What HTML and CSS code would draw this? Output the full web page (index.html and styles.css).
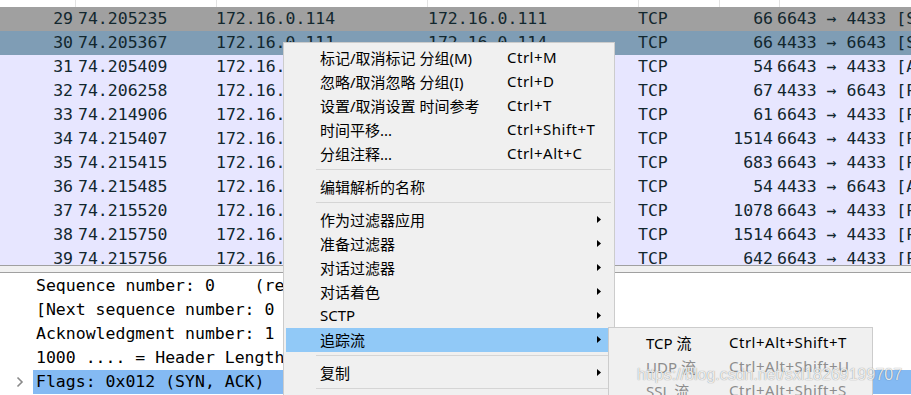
FILE: index.html
```html
<!DOCTYPE html>
<html>
  <head>
    <link rel="stylesheet" href="styles.css">
  </head>
  <body>
    <div class="screen">
      <div class="list-head">
        <span></span><span></span><span></span><span></span><span></span><span></span><span></span>
      </div>

      <div class="packet-list">
        <div class="row ignored">
          <span class="no">29</span><span>74.205235</span><span>172.16.0.114</span><span>172.16.0.111</span><span>TCP</span><span class="len">66</span><span>6643 → 4433 [SYN]</span>
        </div>
        <div class="row current">
          <span class="no">30</span><span>74.205367</span><span>172.16.0.111</span><span>172.16.0.114</span><span>TCP</span><span class="len">66</span><span>4433 → 6643 [SYN, ACK]</span>
        </div>
        <div class="row">
          <span class="no">31</span><span>74.205409</span><span>172.16.0.114</span><span>172.16.0.111</span><span>TCP</span><span class="len">54</span><span>6643 → 4433 [ACK]</span>
        </div>
        <div class="row">
          <span class="no">32</span><span>74.206258</span><span>172.16.0.111</span><span>172.16.0.114</span><span>TCP</span><span class="len">67</span><span>4433 → 6643 [PSH, ACK]</span>
        </div>
        <div class="row">
          <span class="no">33</span><span>74.214906</span><span>172.16.0.114</span><span>172.16.0.111</span><span>TCP</span><span class="len">61</span><span>6643 → 4433 [PSH, ACK]</span>
        </div>
        <div class="row">
          <span class="no">34</span><span>74.215407</span><span>172.16.0.114</span><span>172.16.0.111</span><span>TCP</span><span class="len">1514</span><span>6643 → 4433 [PSH, ACK]</span>
        </div>
        <div class="row">
          <span class="no">35</span><span>74.215415</span><span>172.16.0.114</span><span>172.16.0.111</span><span>TCP</span><span class="len">683</span><span>6643 → 4433 [PSH, ACK]</span>
        </div>
        <div class="row">
          <span class="no">36</span><span>74.215485</span><span>172.16.0.111</span><span>172.16.0.114</span><span>TCP</span><span class="len">54</span><span>4433 → 6643 [ACK]</span>
        </div>
        <div class="row">
          <span class="no">37</span><span>74.215520</span><span>172.16.0.114</span><span>172.16.0.111</span><span>TCP</span><span class="len">1078</span><span>6643 → 4433 [PSH, ACK]</span>
        </div>
        <div class="row">
          <span class="no">38</span><span>74.215750</span><span>172.16.0.114</span><span>172.16.0.111</span><span>TCP</span><span class="len">1514</span><span>6643 → 4433 [PSH, ACK]</span>
        </div>
        <div class="row">
          <span class="no">39</span><span>74.215756</span><span>172.16.0.114</span><span>172.16.0.111</span><span>TCP</span><span class="len">642</span><span>6643 → 4433 [PSH, ACK]</span>
        </div>
      </div>

      <div class="splitter"></div>

      <div class="details">
        <div class="line"><span class="twisty"></span><span class="text">Sequence number: 0    (relative sequence number)</span></div>
        <div class="line"><span class="twisty"></span><span class="text">[Next sequence number: 0    (relative sequence number)]</span></div>
        <div class="line"><span class="twisty"></span><span class="text">Acknowledgment number: 1    (relative ack number)</span></div>
        <div class="line"><span class="twisty"></span><span class="text">1000 .... = Header Length: 32 bytes (8)</span></div>
        <div class="line selected">
          <span class="twisty">
            <svg width="8" height="12" viewBox="0 0 8 12"><polyline points="1.5,1.5 6,6 1.5,10.5" fill="none" stroke="#8a8a8a" stroke-width="1.6"/></svg>
          </span>
          <span class="text">Flags: 0x012 (SYN, ACK)</span>
        </div>
      </div>

      <!-- context menu -->
      <div class="menu">
        <div class="item"><span class="label">标记/取消标记 分组(M)</span><span class="key">Ctrl+M</span></div>
        <div class="item"><span class="label">忽略/取消忽略 分组(I)</span><span class="key">Ctrl+D</span></div>
        <div class="item"><span class="label">设置/取消设置 时间参考</span><span class="key">Ctrl+T</span></div>
        <div class="item"><span class="label">时间平移...</span><span class="key">Ctrl+Shift+T</span></div>
        <div class="item"><span class="label">分组注释...</span><span class="key">Ctrl+Alt+C</span></div>
        <div class="sep"></div>
        <div class="item"><span class="label">编辑解析的名称</span></div>
        <div class="sep"></div>
        <div class="item"><span class="label">作为过滤器应用</span><svg class="arrow" width="4" height="7" viewBox="0 0 4 7"><polygon points="0,0 4,3.5 0,7"/></svg></div>
        <div class="item"><span class="label">准备过滤器</span><svg class="arrow" width="4" height="7" viewBox="0 0 4 7"><polygon points="0,0 4,3.5 0,7"/></svg></div>
        <div class="item"><span class="label">对话过滤器</span><svg class="arrow" width="4" height="7" viewBox="0 0 4 7"><polygon points="0,0 4,3.5 0,7"/></svg></div>
        <div class="item"><span class="label">对话着色</span><svg class="arrow" width="4" height="7" viewBox="0 0 4 7"><polygon points="0,0 4,3.5 0,7"/></svg></div>
        <div class="item"><span class="label">SCTP</span><svg class="arrow" width="4" height="7" viewBox="0 0 4 7"><polygon points="0,0 4,3.5 0,7"/></svg></div>
        <div class="item active"><span class="label">追踪流</span><svg class="arrow" width="4" height="7" viewBox="0 0 4 7"><polygon points="0,0 4,3.5 0,7"/></svg></div>
        <div class="sep"></div>
        <div class="item"><span class="label">复制</span><svg class="arrow" width="4" height="7" viewBox="0 0 4 7"><polygon points="0,0 4,3.5 0,7"/></svg></div>
        <div class="sep"></div>
        <div class="item"><span class="label">协议首选项</span></div>
      </div>

      <div class="menu submenu">
        <div class="item"><span class="label">TCP 流</span><span class="key">Ctrl+Alt+Shift+T</span></div>
        <div class="item disabled"><span class="label">UDP 流</span><span class="key">Ctrl+Alt+Shift+U</span></div>
        <div class="item disabled"><span class="label">SSL 流</span><span class="key">Ctrl+Alt+Shift+S</span></div>
      </div>

      <div class="watermark">https://blog.csdn.net/sxl18269199707</div>
    </div>
  </body>
</html>
```

FILE: styles.css
```css
body {
  margin: 0;
  background: #fff;
  font-family: "DejaVu Sans Mono", monospace;
  overflow: hidden;
}
.screen {
  position: relative;
  width: 911px;
  height: 395px;
  overflow: hidden;
}
.list-head {
  display: grid;
  grid-template-columns: 75px 141px 211px 211px 81px 60px 1fr;
  height: 7px;
  background: #fff;
}
.list-head span + span {
  border-left: 1px solid #e3e3e3;
}
.packet-list {
  height: 258px;
  overflow: hidden;
  font-size: 16.5px;
  color: #12272e;
}
.row {
  display: grid;
  grid-template-columns: 76px 138px 212px 210px 80px 59px 1fr;
  height: 24px;
  line-height: 24px;
  background: #e7e6ff;
  white-space: nowrap;
}
.row span {
  overflow: hidden;
  padding-left: 2px;
}
.row .no {
  text-align: right;
  padding: 0 3px 0 0;
}
.row .len {
  text-align: right;
  padding: 0 2px 0 0;
}
.row.ignored {
  background: #a0a0a0;
}
.row.current {
  background: #7f9db5;
}
.splitter {
  height: 6px;
  background: #f0f0f0;
  border-top: 1px solid #a0a0a0;
  border-bottom: 1px solid #a0a0a0;
}
.details {
  padding-top: 1px;
  font-size: 16.5px;
  color: #000;
}
.line {
  display: flex;
  height: 24px;
  line-height: 24px;
  white-space: pre;
}
.twisty {
  width: 33px;
  flex: none;
  display: flex;
  align-items: center;
  justify-content: flex-end;
  padding-right: 9px;
  box-sizing: border-box;
}
.line .text {
  flex: 1;
  padding-left: 3px;
}
.line.selected .text {
  background: #84baf3;
}

/* context menu */
.menu {
  position: absolute;
  left: 283px;
  top: 42px;
  width: 326px;
  padding: 3px 2px;
  background: #f0f0f0;
  border: 1px solid #cccccc;
  font-family: "Noto Sans", "Noto Sans CJK SC", sans-serif;
  font-size: 15px;
  color: #000;
}
.item {
  position: relative;
  display: flex;
  align-items: center;
  height: 24px;
  padding-left: 34px;
  padding-bottom: 2px;
  box-sizing: border-box;
  white-space: nowrap;
}
.item .label {
  width: 187px;
  flex: none;
}
.item .key {
  letter-spacing: 0.5px;
}
.item .arrow {
  position: absolute;
  right: 11px;
  top: 8px;
}
.item.active {
  background: #91c9f7;
}
.sep {
  height: 1px;
  background: #d5d5d5;
  margin: 3px 1px 5px 30px;
}
.submenu {
  left: 608px;
  top: 327px;
  width: 259px;
  padding: 3px 2px;
}
.submenu .item {
  padding-left: 35px;
}
.submenu .item .label {
  width: 83px;
}
.item.disabled {
  color: #8d8d8d;
}
.watermark {
  position: absolute;
  left: 637px;
  top: 365px;
  font-family: "Liberation Sans", Arial, sans-serif;
  font-size: 16px;
  line-height: 20px;
  color: rgba(255, 255, 255, 0.85);
  text-shadow: 0 0 1px rgba(0, 0, 0, 0.5);
  white-space: nowrap;
}
```
